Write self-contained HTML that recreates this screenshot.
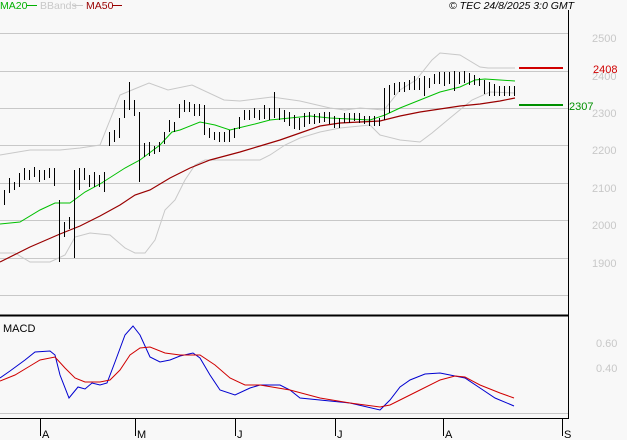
<!DOCTYPE html>
<html><head><meta charset="utf-8"><style>
html,body{margin:0;padding:0;background:#f8f8f8;}
svg{display:block;font-family:"Liberation Sans",sans-serif;}
</style></head><body>
<svg width="627" height="440" viewBox="0 0 627 440" xmlns="http://www.w3.org/2000/svg">
<rect width="627" height="440" fill="#f8f8f8"/>
<g stroke="#c8c8c8" stroke-width="1">
<line x1="0" y1="33.5" x2="568" y2="33.5"/>
<line x1="0" y1="71.5" x2="568" y2="71.5"/>
<line x1="0" y1="108.5" x2="568" y2="108.5"/>
<line x1="0" y1="145.5" x2="568" y2="145.5"/>
<line x1="0" y1="183.5" x2="568" y2="183.5"/>
<line x1="0" y1="220.5" x2="568" y2="220.5"/>
<line x1="0" y1="258.5" x2="568" y2="258.5"/>
<line x1="0" y1="295.5" x2="568" y2="295.5"/>
<line x1="0" y1="413.5" x2="568" y2="413.5"/>
</g>
<g fill="#c8c8c8" font-size="11">
<text x="592" y="42">2500</text><text x="592" y="80">2400</text><text x="592" y="117">2300</text>
<text x="592" y="154">2200</text><text x="592" y="192">2100</text><text x="592" y="229">2000</text>
<text x="592" y="267">1900</text><text x="596" y="347">0.60</text><text x="596" y="372">0.40</text>
</g>
<!-- bbands -->
<g fill="none" stroke="#c8c8c8" stroke-width="1">
<polyline points="0,155 30,150 60,150 80,148 100,145 110,120 120,95 132,90 149,83 168,90 192,85 224,100 240,101 272,97 300,101 330,108 345,110 360,108 384,110 400,90 416,80 432,60 440,53 460,55 480,67 488,68 515,68"/>
<polyline points="0,253 15,253 30,262 50,262 65,255 75,237 90,233 110,235 125,248 135,253 145,253 155,240 165,210 175,200 185,180 195,165 205,160 230,160 260,160 270,155 285,145 300,138 320,132 340,128 370,125 380,135 400,140 420,142 432,133 450,118 472,100 490,92 515,93"/>
</g>
<polyline fill="none" stroke="#00c000" stroke-width="1" points="0,224 20,222 40,210 55,203 70,203 85,192 100,184 125,168 140,160 160,145 172,132 180,130 200,122 215,125 230,130 255,124 270,120 290,118 310,116 330,118 350,119 370,120 385,115 400,108 420,100 440,92 460,87 475,80 485,79 500,80 515,81"/>
<polyline fill="none" stroke="#990000" stroke-width="1.2" points="0,262 30,247 60,234 80,226 100,216 120,205 135,195 150,190 170,178 190,168 210,160 240,152 260,146 280,140 300,133 320,126 340,123 360,122 380,121 400,116 420,112 440,109 460,106 480,104 500,101 515,98"/>
<!-- price bars -->
<g stroke="#000" stroke-width="1" fill="none">
<path d="M4.5 190v15M9.5 178v15M14.5 182v8M19.5 173v14M24.5 168v12M29.5 170v10M34.5 167v10M39.5 170v12M44.5 170v10M49.5 168v10M54.5 168v18M59.5 200v62M64.5 222v15M69.5 217v12M74.5 170v88M79.5 168v22M84.5 168v12M89.5 175v12M94.5 172v15M99.5 175v12M104.5 172v20M109.5 132v14M114.5 130v12M119.5 118v20M124.5 100v18M129.5 82v28M134.5 100v16M139.5 112v70M144.5 143v14M149.5 142v14M154.5 146v8M159.5 142v10M164.5 132v12M169.5 120v12M174.5 122v10M179.5 104v14M184.5 100v12M189.5 102v10M194.5 104v12M199.5 104v12M204.5 105v30M209.5 128v10M214.5 132v8M219.5 132v10M224.5 132v10M229.5 130v12M234.5 128v10M239.5 117v12M244.5 110v10M249.5 110v10M254.5 108v10M259.5 110v10M264.5 105v14M269.5 108v12M274.5 92v26M279.5 108v12M284.5 110v12M289.5 112v14M294.5 115v14M299.5 118v12M304.5 113v14M309.5 112v12M314.5 114v10M319.5 113v10M324.5 112v10M329.5 112v12M334.5 116v12M339.5 118v10M344.5 113v10M349.5 113v10M354.5 113v8M359.5 113v10M364.5 116v8M369.5 116v10M374.5 116v10M379.5 118v8M384.5 88v32M389.5 85v28M394.5 83v12M399.5 82v10M404.5 82v10M409.5 80v10M414.5 76v14M419.5 78v12M424.5 76v20M429.5 78v10M434.5 74v10M439.5 72v12M444.5 72v14M449.5 72v12M454.5 71v20M459.5 72v12M464.5 71v12M469.5 73v12M474.5 75v10M479.5 78v8M484.5 80v14M489.5 82v14M494.5 84v12M499.5 86v10M504.5 86v10M509.5 86v10M514.5 86v10"/>
</g>
<!-- right markers -->
<line x1="519" y1="68" x2="563" y2="68" stroke="#d00000" stroke-width="2"/>
<line x1="519" y1="105" x2="563" y2="105" stroke="#009000" stroke-width="2"/>
<text x="593" y="73" font-size="11" fill="#d00000">2408</text>
<text x="569" y="110" font-size="11" fill="#009000">2307</text>
<!-- frame -->
<line x1="568.5" y1="10" x2="568.5" y2="419" stroke="#000"/>
<line x1="0" y1="315.5" x2="569" y2="315.5" stroke="#000" stroke-width="2"/>
<line x1="0" y1="418.5" x2="569" y2="418.5" stroke="#000"/>
<g stroke="#000"><line x1="40.5" y1="419" x2="40.5" y2="436"/><line x1="135.5" y1="419" x2="135.5" y2="436"/><line x1="235.5" y1="419" x2="235.5" y2="436"/><line x1="335.5" y1="419" x2="335.5" y2="436"/><line x1="443.5" y1="419" x2="443.5" y2="436"/><line x1="562.5" y1="419" x2="562.5" y2="436"/></g>
<g font-size="11" fill="#000"><text x="42" y="438">A</text><text x="137" y="438">M</text><text x="237" y="438">J</text><text x="337" y="438">J</text><text x="445" y="438">A</text><text x="564" y="438">S</text></g>
<!-- MACD -->
<text x="3" y="332" font-size="11" fill="#000">MACD</text>
<polyline fill="none" stroke="#0000d0" stroke-width="1" points="0,378 10,371 25,360 35,352 50,351 55,355 60,375 69,398 78,387 85,389 92,383 100,385 107,383 115,362 125,335 133,326 140,335 150,357 160,362 170,360 180,356 193,353 200,358 210,375 220,390 235,395 250,388 260,385 280,385 290,390 300,398 320,400 350,403 380,410 390,400 400,387 410,380 425,374 440,373 450,375 465,378 480,388 495,398 514,406"/>
<polyline fill="none" stroke="#d00000" stroke-width="1" points="0,381 15,375 30,366 40,360 55,357 65,368 75,378 85,382 100,382 110,380 120,370 130,355 140,348 150,347 165,353 180,355 200,355 215,365 230,378 245,385 260,385 290,390 320,398 350,403 380,407 390,405 400,400 420,390 440,380 455,376 465,377 480,385 500,393 514,398"/>
<!-- legend -->
<g font-size="10.5">
<text x="0" y="9" fill="#00b000">MA20</text><line x1="27" y1="5.5" x2="37" y2="5.5" stroke="#00b000"/>
<text x="40" y="9" fill="#c8c8c8">BBands</text><line x1="73" y1="5.5" x2="83" y2="5.5" stroke="#c8c8c8"/>
<text x="86" y="9" fill="#990000">MA50</text><line x1="112" y1="5.5" x2="122" y2="5.5" stroke="#990000"/>
<text x="449" y="9" fill="#000" font-style="italic">© TEC 24/8/2025 3:0 GMT</text>
</g>
</svg>
</body></html>
